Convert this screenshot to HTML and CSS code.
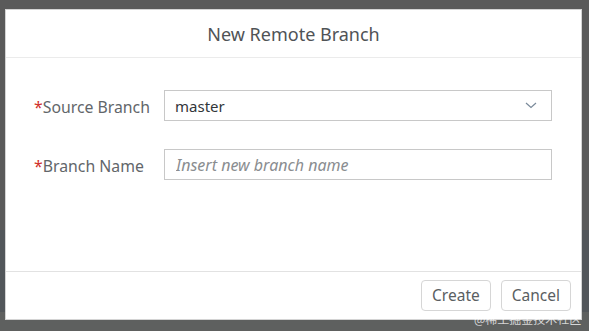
FILE: index.html
```html
<!DOCTYPE html>
<html lang="en">
<head>
    <meta charset="UTF-8">
    <title>New Remote Branch</title>
    <link rel="stylesheet" href="styles.css">
</head>
<body>

    <div class="page">
        <div class="dialog">
            <div class="dialog-header">New Remote Branch</div>

            <div class="dialog-body">
                <div class="form-row">
                    <label class="form-label"><span class="req">*</span>Source Branch</label>
                    <div class="select">
                        <span class="select-value">master</span>
                        <svg class="chevron" width="12" height="7" viewBox="0 0 12 7">
                            <path d="M1 1 L6 5.5 L11 1" fill="none" stroke="#7a8a9a" stroke-width="1.2"/>
                        </svg>
                    </div>
                </div>
                <div class="form-row">
                    <label class="form-label"><span class="req">*</span>Branch Name</label>
                    <input class="text-input" type="text" placeholder="Insert new branch name">
                </div>
            </div>

            <div class="dialog-footer">
                <button class="btn">Create</button>
                <button class="btn">Cancel</button>
            </div>
        </div>
    </div>

    <div class="watermark">@稀土掘金技术社区</div>

</body>
</html>
```

FILE: styles.css
```css
body {
    margin: 0;
    font-family: "Noto Sans", sans-serif;
    background: linear-gradient(#5a5a5a 0, #5a5a5a 230px, #52565a 230px, #52565a 312px, #5e605f 312px);
    height: 331px;
    overflow: hidden;
}
.page {
    padding: 9px 7px 0 5px;
}
.dialog {
    height: 311px;
    box-sizing: border-box;
    background: white;
    border: 1px solid #d4d4d4;
    display: flex;
    flex-direction: column;
}
.dialog-header {
    height: 47px;
    line-height: 49px;
    text-align: center;
    font-size: 18px;
    color: #505356;
    border-bottom: 1px solid #ebebeb;
}
.dialog-body {
    flex: 1;
    padding: 32px 29px 0 28px;
    display: flex;
    flex-direction: column;
    gap: 28px;
}
.form-row {
    display: flex;
    align-items: center;
}
.form-label {
    width: 130px;
    font-size: 15.8px;
    color: #62666a;
    padding-top: 2px;
}
.req {
    color: #d0302b;
}
.select, .text-input {
    flex: 1;
    height: 31px;
    box-sizing: border-box;
    border: 1px solid #c8c8c8;
    background: white;
}
.select {
    display: flex;
    align-items: center;
    justify-content: space-between;
    padding: 0 14px 0 10px;
}
.select-value {
    font-size: 15px;
    color: #32363a;
}
.text-input {
    padding: 0 11px;
    font-family: "Noto Sans", sans-serif;
    font-size: 16px;
    outline: none;
}
.text-input::placeholder {
    color: #8a8d90;
    font-style: italic;
}
.dialog-footer {
    height: 46px;
    flex-shrink: 0;
    border-top: 1px solid #e2e2e2;
    display: flex;
    justify-content: flex-end;
    align-items: center;
    gap: 10px;
    padding: 0 10px 1px 0;
}
.btn {
    height: 31px;
    padding: 0 10px;
    background: white;
    border: 1px solid #d6d6d6;
    border-radius: 4px;
    font-family: "Noto Sans", sans-serif;
    font-size: 15.5px;
    color: #5a5e62;
    cursor: pointer;
}
.watermark {
    position: absolute;
    left: 474px;
    top: 310px;
    font-family: "Noto Sans CJK SC", sans-serif;
    font-size: 12px;
    color: rgba(255, 255, 255, 0.75);
}
```
